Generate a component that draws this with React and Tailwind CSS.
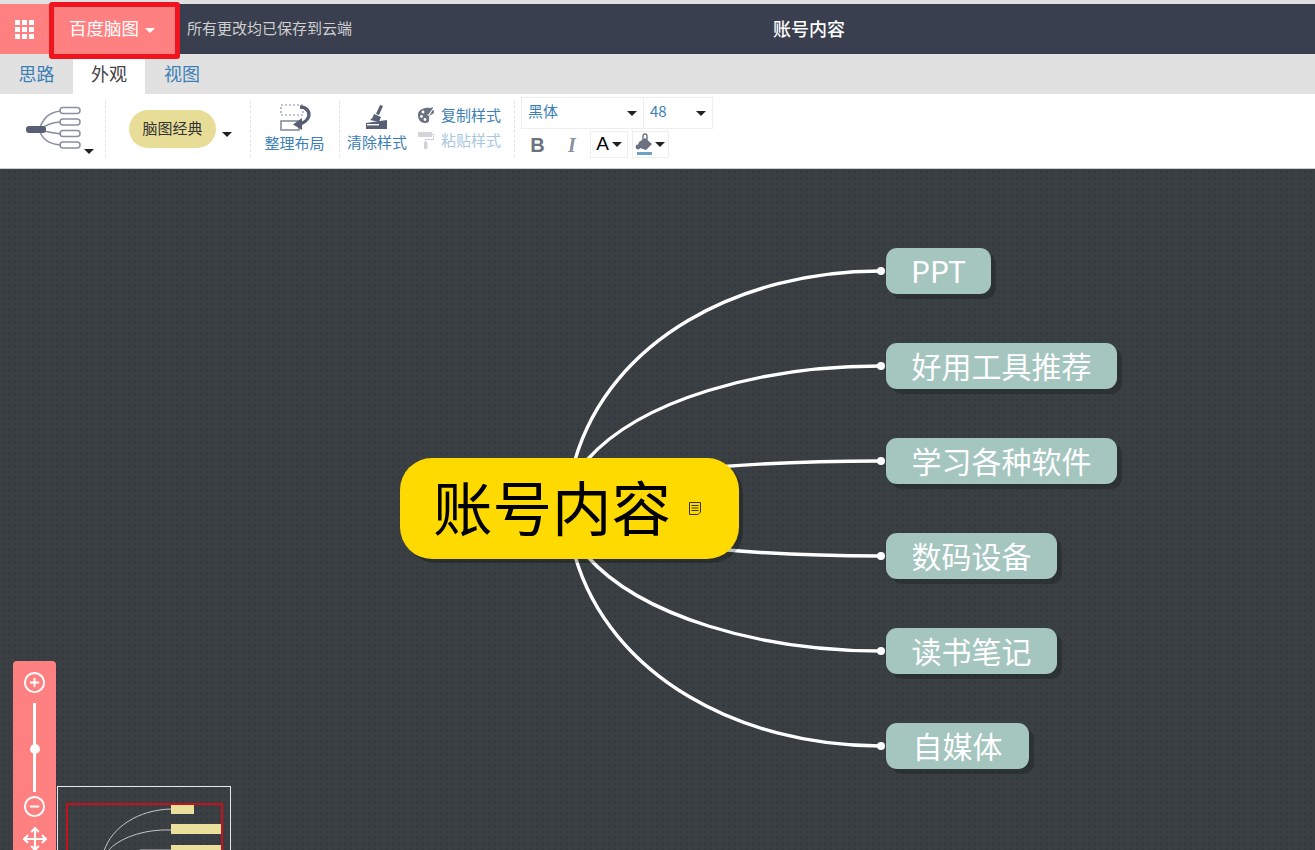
import { CirclePlus, CircleMinus, Move } from "lucide-react";

const Caret = ({ className = "" }) => (
  <span className={`inline-block w-0 h-0 border-x-[5px] border-x-transparent border-t-[5px] border-t-[#222] ${className}`} />
);

const Sep = () => <div className="w-0 h-[56px] border-l border-dashed border-[#e4e4e4] self-start mt-[7px]" />;

const branches = [
  { label: "PPT", top: 248, width: 105 },
  { label: "好用工具推荐", top: 343, width: 231 },
  { label: "学习各种软件", top: 438, width: 231 },
  { label: "数码设备", top: 533, width: 171 },
  { label: "读书笔记", top: 628, width: 171 },
  { label: "自媒体", top: 723, width: 143 },
];

const curves = [
  "M575 460 C610 340 740 271 880 271",
  "M587 460 C640 400 760 366 880 366",
  "M716 467 C780 462 830 461 880 461",
  "M716 549 C780 555 830 556 880 556",
  "M587 556 C640 616 760 651 880 651",
  "M575 556 C610 676 740 746 880 746",
];

const TemplateIcon = () => (
  <svg width="58" height="46" viewBox="0 0 58 46" fill="none" stroke="#8a90a0" strokeWidth="1.5">
    <path d="M14 24 C18 12 24 6 36 5" />
    <path d="M14 24 C22 18 28 16 36 16" />
    <path d="M14 24 C22 26 28 27 36 28" />
    <path d="M14 24 C18 34 24 38 36 39" />
    <rect x="35" y="1.5" width="20" height="6" rx="3" />
    <rect x="35" y="13" width="20" height="6" rx="3" />
    <rect x="35" y="24.5" width="20" height="6" rx="3" />
    <rect x="35" y="36" width="20" height="6" rx="3" />
    <rect x="1" y="20" width="20" height="7" rx="3" fill="#575e75" stroke="none" />
  </svg>
);

const LayoutIcon = () => (
  <svg width="32" height="28" viewBox="0 0 32 28" fill="none">
    <rect x="2" y="1" width="22" height="10" stroke="#8a90a0" strokeWidth="1.2" strokeDasharray="2 2" />
    <rect x="2" y="17" width="18" height="9" stroke="#7f8594" strokeWidth="1.5" />
    <path d="M21 3 C28 3 31 8 29.5 13 C28 17 25 19 19 20.5" stroke="#575e75" strokeWidth="3.4" />
    <path d="M23 14 L14 20.5 L23 26 Z" fill="#575e75" />
  </svg>
);

const BroomIcon = () => (
  <svg width="24" height="26" viewBox="0 0 24 26" fill="#575e75">
    <path d="M15 1 L18 2 L14 11 L11 10 Z" />
    <path d="M9 10 L16 13 L14 18 L5 16 Q8 14 9 10 Z" />
    <path d="M1 19 L22 16 L22 25 L1 25 Z" />
    <rect x="2" y="20" width="12" height="1.4" fill="#fff" />
  </svg>
);

const PaletteIcon = () => (
  <svg width="18" height="18" viewBox="0 0 18 18">
    <path d="M8 2 C13 1 17 3 17 6 C17 9 12 8 12 11 C12 14 13 17 8 17 C3 17 1 13 1 9 C1 5 4 3 8 2 Z" fill="#6b7180" />
    <circle cx="6" cy="6" r="1.4" fill="#fff" />
    <circle cx="4.5" cy="10.5" r="1.4" fill="#fff" />
    <circle cx="8" cy="13.5" r="1.4" fill="#fff" />
    <path d="M10 9 L16 1 L17 2 L12 10 Z" fill="#fff" />
    <path d="M10.5 8.5 L15.5 1.5" stroke="#6b7180" strokeWidth="1.4" />
  </svg>
);

const RollerIcon = () => (
  <svg width="18" height="18" viewBox="0 0 18 18" fill="#d2d4da">
    <rect x="1" y="1" width="14" height="5" />
    <path d="M15 3 H17 V9 H9 V11 H8 V8 H16 V4 H15 Z" />
    <rect x="7" y="11" width="3.5" height="7" />
  </svg>
);

const FillIcon = () => (
  <svg width="22" height="24" viewBox="0 0 22 24">
    <path d="M10 5 L17 11 L11 17 L5 15 Q2 13 4 9 Z" fill="#6b7180" />
    <path d="M8 8 V3 Q8 1 10 1 Q12 1 12 3 V8" stroke="#6b7180" strokeWidth="1.4" fill="none" />
    <circle cx="3" cy="14" r="2.4" fill="#6b7180" />
    <rect x="2" y="19" width="15" height="3" fill="#6da2c9" />
  </svg>
);

const NoteIcon = () => (
  <svg width="14" height="15" viewBox="0 0 14 15" fill="none" stroke="#333" strokeWidth="1">
    <path d="M1.5 1.5 H12.5 V11 L10 13.5 H1.5 Z" />
    <path d="M3.5 4.5 H10.5 M3.5 7 H10.5 M3.5 9.5 H10.5" />
  </svg>
);

export default function App() {
  return (
    <div
      className="relative w-full h-[850px] overflow-hidden flex flex-col"
      style={{ fontFamily: '"Noto Sans CJK SC", "Liberation Sans", sans-serif' }}
    >
      {/* 顶部栏 */}
      <div className="h-1 bg-[#e0e0e0] shrink-0" />
      <div className="h-[50px] bg-[#393f4f] flex items-center shrink-0">
        <div className="w-[48px] h-full bg-[#ff8080] flex items-center justify-center">
          <div className="grid grid-cols-3 gap-[2px]">
            {Array.from({ length: 9 }).map((_, i) => (
              <span key={i} className="w-[5px] h-[5px] bg-white" />
            ))}
          </div>
        </div>
        <div className="w-[131px] h-full bg-[#ff8080] flex items-center pl-[21px] pb-[2px] gap-[6px] text-white text-[17.5px]">
          百度脑图
          <Caret className="border-t-white mt-[4px]" />
        </div>
        <span className="ml-2 mb-[2px] text-[15px] text-[#cfcfcf]">所有更改均已保存到云端</span>
        <span className="ml-[421px] mb-[2px] text-[18px] text-white font-medium">账号内容</span>
      </div>

      {/* 标签 */}
      <div className="h-10 bg-[#e1e1e1] flex items-end shrink-0 text-[18px] text-[#3d80b6]">
        <div className="w-[73px] h-full flex items-center justify-center pb-[2px]">思路</div>
        <div className="w-[72px] h-full flex items-center justify-center pb-[2px] bg-white text-[#444]">外观</div>
        <div className="w-[74px] h-full flex items-center justify-center pb-[2px]">视图</div>
      </div>

      {/* 工具栏 */}
      <div className="h-[75px] bg-white border-b border-[#ccc] flex shrink-0 text-[#3d80b6]">
        <div className="w-[105px] flex pl-[25px] pt-[12px] relative">
          <TemplateIcon />
          <Caret className="absolute left-[84px] top-[55px]" />
        </div>
        <Sep />
        <div className="w-[144px] flex items-start pl-[23px] pt-[16px] gap-[6px]">
          <div className="w-[87px] h-[38px] rounded-[19px] bg-[#e8dd97] flex items-center justify-center text-[15px] text-[#333] pb-[2px]">
            脑图经典
          </div>
          <Caret className="mt-[22px]" />
        </div>
        <Sep />
        <div className="w-[88px] flex flex-col items-center pt-[10px] pr-[1px]">
          <LayoutIcon />
          <span className="text-[15px] leading-5 mt-[1px]">整理布局</span>
        </div>
        <Sep />
        <div className="w-[72px] flex flex-col items-center pt-[10px] pl-[2px]">
          <BroomIcon />
          <span className="text-[15px] leading-5 mt-[2px]">清除样式</span>
        </div>
        <div className="w-[102px] flex flex-col pl-[5px] pt-[11px] text-[15px] leading-5 gap-[5px]">
          <div className="flex items-center gap-[6px]"><PaletteIcon />复制样式</div>
          <div className="flex items-center gap-[6px] text-[#a9c8e0]"><RollerIcon />粘贴样式</div>
        </div>
        <Sep />
        <div className="flex flex-col pl-[6px] pt-[3px]">
          <div className="flex">
            <div className="w-[123px] h-[32px] border border-[#eee] flex items-center justify-between pl-[6px] pr-[6px] pb-[3px] text-[15px]">
              黑体 <Caret className="mt-[4px]" />
            </div>
            <div className="w-[69px] h-[32px] border border-[#eee] border-l-0 flex items-center justify-between pl-[6px] pr-[6px] pb-[3px] text-[15px]">
              48 <Caret className="mt-[4px]" />
            </div>
          </div>
          <div className="flex items-center mt-[2px] h-[27px]">
            <span className="w-[33px] text-center text-[20px] font-bold text-[#6b7280]" style={{ fontFamily: '"Liberation Sans", sans-serif' }}>B</span>
            <span className="w-[36px] text-center text-[20px] italic font-bold text-[#8a90a0]" style={{ fontFamily: '"Liberation Serif", serif' }}>I</span>
            <div className="w-[38px] h-[27px] border border-[#eee] flex items-center justify-center gap-[3px] text-[19px] text-black" style={{ fontFamily: '"Liberation Sans", sans-serif' }}>
              A <Caret />
            </div>
            <div className="w-[37px] h-[27px] ml-[4px] border border-[#eee] flex items-center pl-[2px]">
              <FillIcon />
              <Caret className="-ml-[2px]" />
            </div>
          </div>
        </div>
      </div>

      {/* 画布 */}
      <div className="relative flex-1 bg-[#393f43] bg-[radial-gradient(#34393d_1.2px,transparent_1.6px)] bg-[size:6px_6px]">
        <svg className="absolute left-0 top-0" width="1315" height="681" viewBox="0 169 1315 681" fill="none">
          {curves.map((d) => (
            <path key={d} d={d} stroke="#fff" strokeWidth="3.4" />
          ))}
          {branches.map((b) => (
            <circle key={b.label} cx="881" cy={b.top + 23} r="4" fill="#fff" />
          ))}
        </svg>

        <div className="absolute left-[400px] top-[289px] w-[339px] h-[101px] rounded-[32px] bg-[#ffda00] shadow-[4px_4px_0_rgba(0,0,0,0.25)] flex items-center pl-[33px] pb-[5px] text-black text-[59.5px] leading-none">
          账号内容
          <span className="ml-[17px] mt-[5px]"><NoteIcon /></span>
        </div>

        {branches.map((b) => (
          <div
            key={b.label}
            className="absolute left-[886px] h-[46px] rounded-[11px] bg-[#a5c5bf] shadow-[5px_5px_0_rgba(0,0,0,0.2)] flex items-center justify-center pb-[3px] text-white text-[30px] leading-none"
            style={{ top: b.top - 169, width: b.width }}
          >
            {b.label}
          </div>
        ))}

        {/* 缩放 */}
        <div className="absolute left-[13px] top-[492px] w-[43px] h-[200px] rounded-t-[4px] bg-[#ff8080] flex flex-col items-center pt-[10px] text-white">
          <CirclePlus size={23} strokeWidth={2} />
          <div className="relative w-[3px] h-[89px] bg-white mt-[9px] flex items-center justify-center shrink-0">
            <span className="absolute top-[41px] w-[10px] h-[10px] rounded-full bg-white" />
          </div>
          <CircleMinus size={23} strokeWidth={2} className="mt-[3px]" />
          <Move size={26} strokeWidth={2} className="mt-[8px]" />
        </div>

        {/* 缩略图 */}
        <div className="absolute left-[57px] top-[617px] w-[174px] h-[70px] border border-b-0 border-[#e8e8e8]">
          <svg className="absolute left-0 top-0" width="172" height="70" viewBox="0 0 172 70" fill="none">
            <path d="M46 64 C54 40 80 23 113 22" stroke="#c8c8c8" strokeWidth="1" />
            <path d="M50 64 C60 52 84 42 113 43" stroke="#c8c8c8" strokeWidth="1" />
            <path d="M82 63 L113 63" stroke="#c8c8c8" strokeWidth="1" />
            <rect x="113" y="17" width="23" height="10" fill="#ebe09b" />
            <rect x="113" y="37" width="50" height="10" fill="#ebe09b" />
            <rect x="113" y="58" width="50" height="10" fill="#ebe09b" />
            <rect x="9" y="63" width="72" height="5" fill="#ebe09b" />
          </svg>
          <div className="absolute left-[8px] top-[16px] w-[157px] h-[60px] border-2 border-[#c8101a]" />
        </div>
      </div>

      {/* 红框标注 */}
      <div className="absolute left-[49px] top-[2px] w-[131px] h-[57px] border-[5px] border-[#f0141e] rounded-[3px]" />
    </div>
  );
}
